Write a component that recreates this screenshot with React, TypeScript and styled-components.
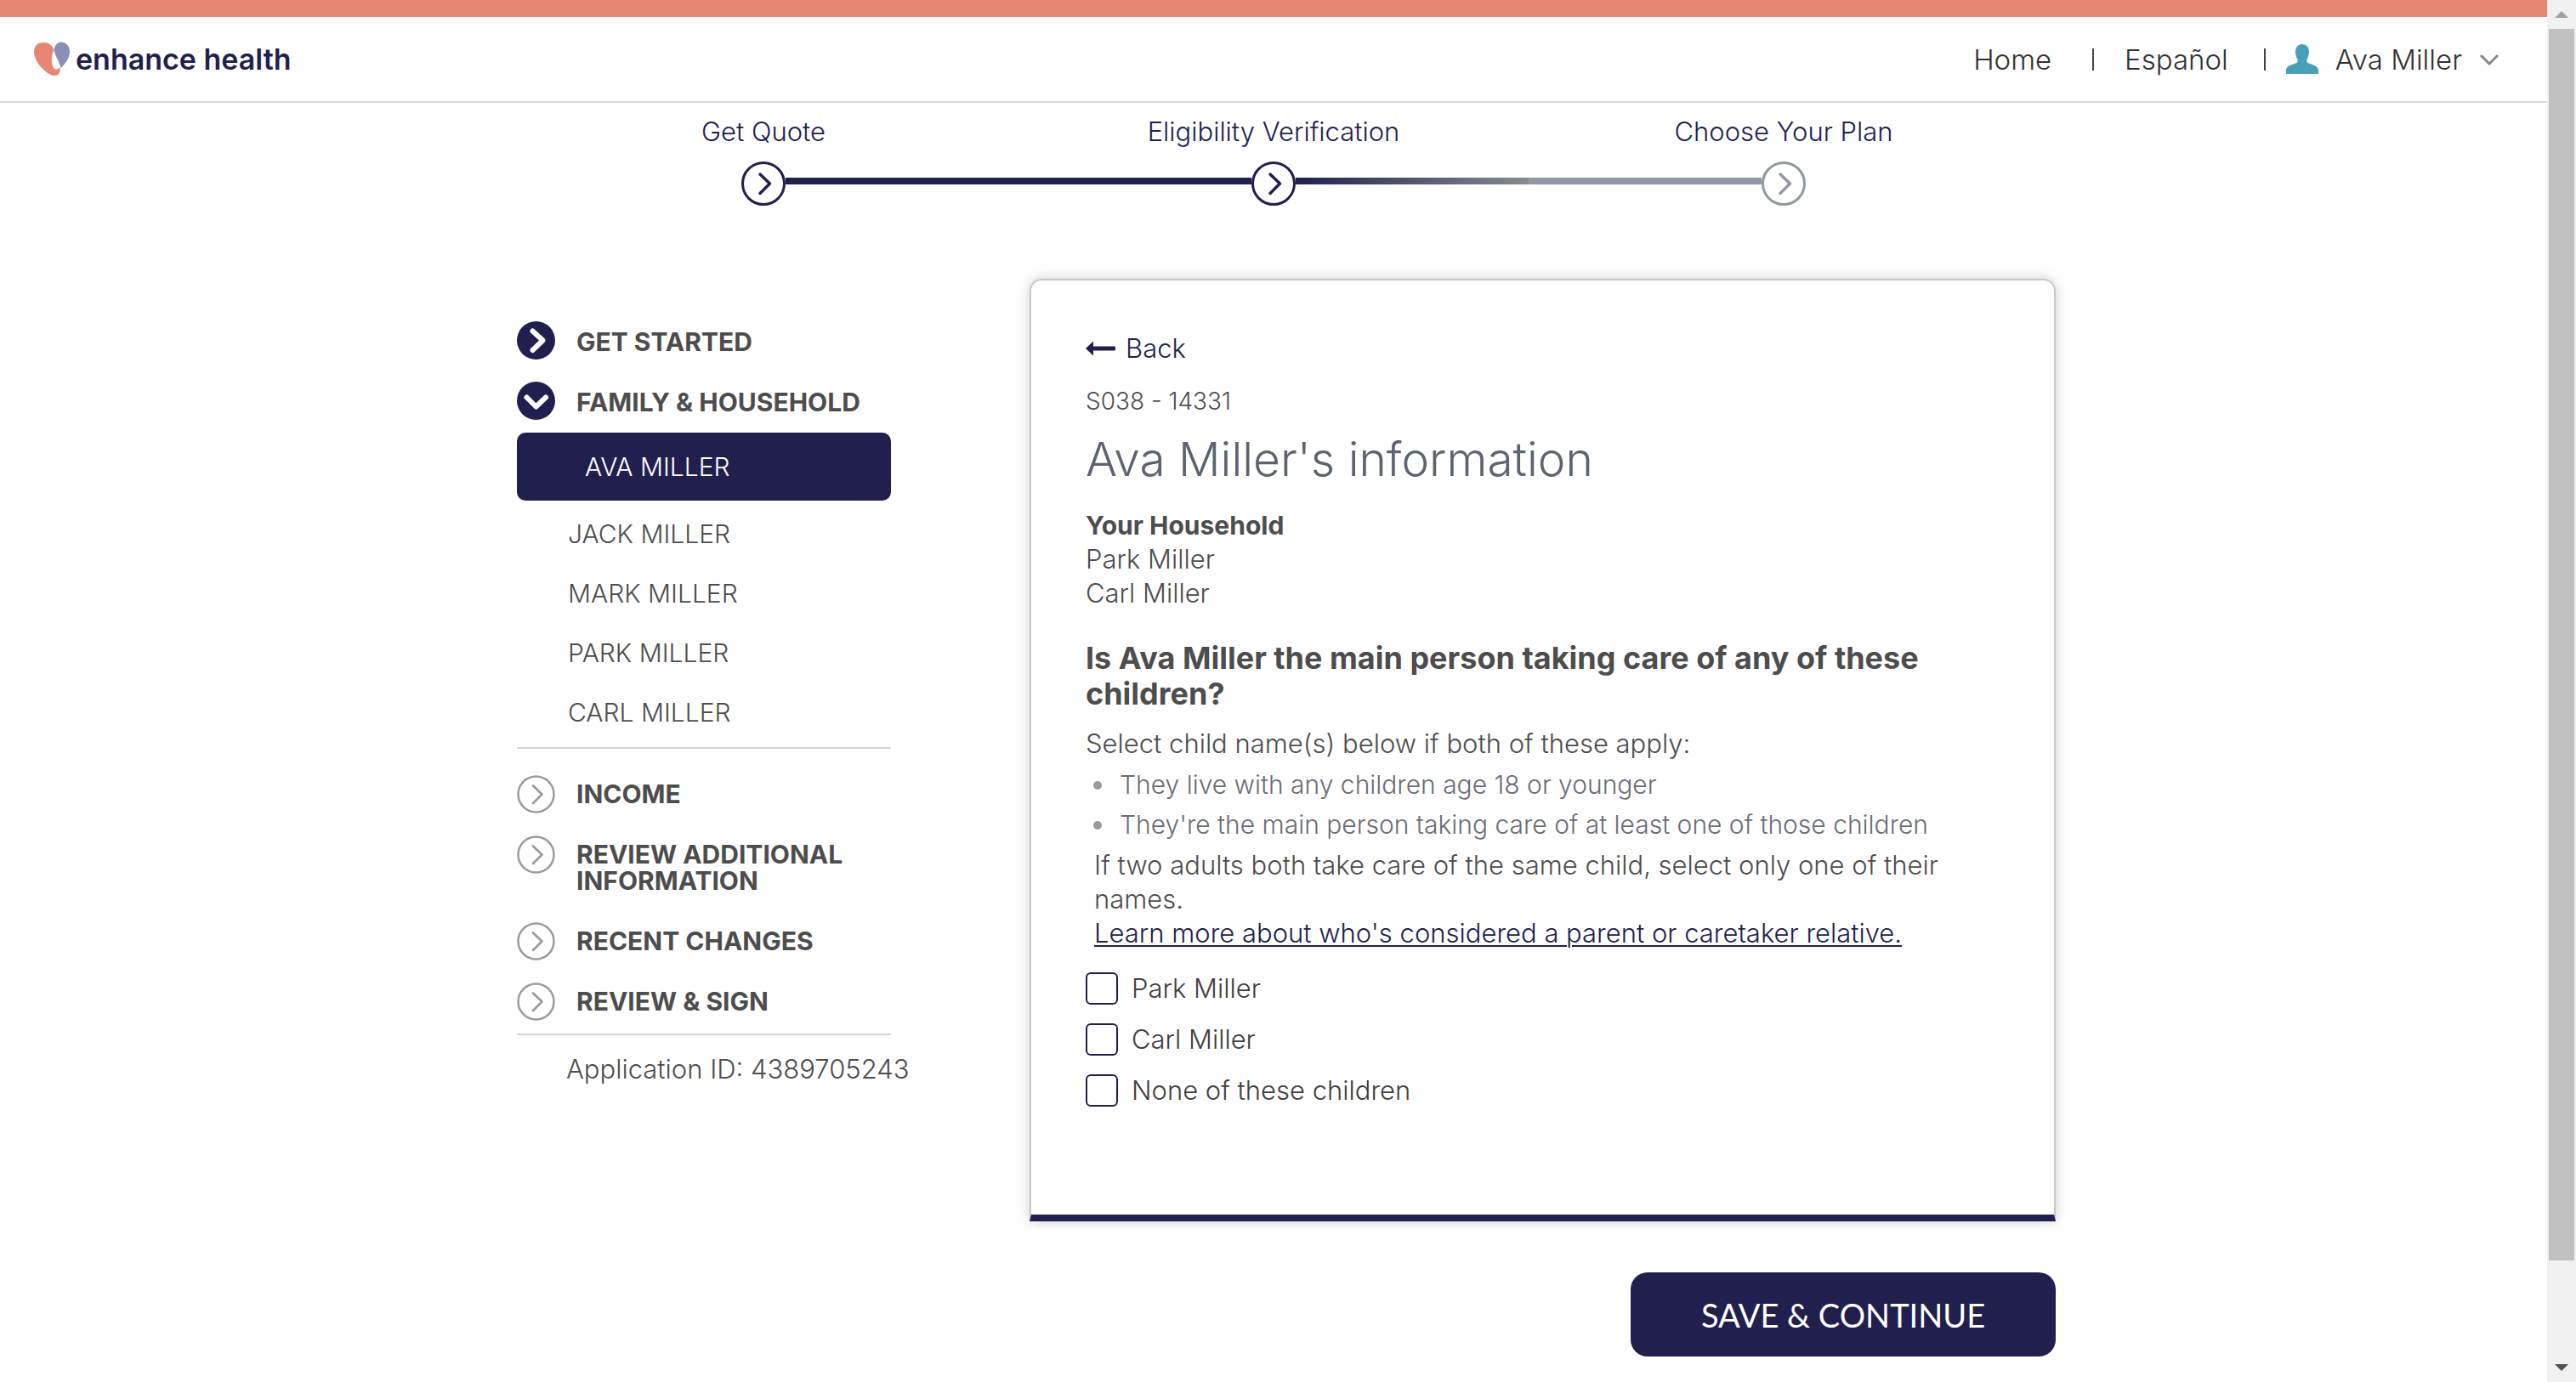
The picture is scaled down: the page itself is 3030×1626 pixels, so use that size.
import React, { useState } from "react";
import styled, { createGlobalStyle, css } from "styled-components";

const navy = "#211f4e";
const ink = "#4d4d4d";
const slate = "#8f98a4";
const rule = "#d4d4d4";
const gray = "#9b9b9b";

const GlobalStyle = createGlobalStyle`
  *, *::before, *::after { box-sizing: border-box; }
  body {
    margin: 0;
    background: #fff;
    color: ${ink};
    font-family: Inter, "Open Sans", sans-serif;
    font-size: 31px;
    font-weight: 300;
    line-height: 40px;
  }
  h1, h2, p, ul, ol { margin: 0; padding: 0; }
  ul, ol { list-style: none; }
  a { color: inherit; text-decoration: none; }
  button { font: inherit; color: inherit; border: 0; background: none; padding: 0; cursor: pointer; }
  svg { flex-shrink: 0; }
`;

const Frame = styled.div`
  display: grid;
  grid-template-columns: minmax(0, 1fr) 34px;
  height: 100vh;
`;

const Page = styled.div`
  overflow-y: auto;
  scrollbar-width: none;
`;

const ScrollRail = styled.div`
  display: flex;
  flex-direction: column;
  background: #f1f1f1;
`;

const RailEnd = styled.div`
  display: flex;
  align-items: center;
  justify-content: center;
  height: 34px;
`;

const RailTrack = styled.div`
  flex: 1;
  padding: 0 2px;
`;

const RailThumb = styled.div`
  height: 93%;
  background: #c1c1c1;
`;

const Header = styled.header`
  display: flex;
  align-items: center;
  justify-content: space-between;
  height: 121px;
  padding: 0 56px 0 40px;
  border-top: 20px solid #e68673;
  border-bottom: 2px solid #d9d9d9;
`;

const Brand = styled.a`
  display: flex;
  align-items: center;
  gap: 6px;
  color: ${navy};
  font-size: 34px;
  font-weight: 600;
`;

const Nav = styled.nav`
  display: flex;
  align-items: center;
  color: #333;
  font-size: 33px;
`;

const NavDivider = styled.span`
  width: 2px;
  height: 26px;
  margin: 0 36px 0 48px;
  background: #444;

  &:nth-of-type(2) {
    margin: 0 24px 0 42px;
  }
`;

const AccountButton = styled.button`
  display: flex;
  align-items: center;
  gap: 20px;
`;

const Steps = styled.ol`
  display: grid;
  grid-template-columns: repeat(3, minmax(0, 1fr));
  max-width: 1800px;
  margin: 14px auto 0;
`;

const Step = styled.li`
  text-align: center;
  color: ${navy};
  font-size: 31px;
`;

const StepTrack = styled.div`
  display: flex;
  align-items: center;
  margin-top: 15px;
`;

const StepLine = styled.span<{ $fill: string }>`
  flex: 1;
  height: 8px;
  margin-bottom: 6px;
  background: ${(p) => p.$fill};
`;

const Layout = styled.div`
  display: grid;
  grid-template-columns: 470px minmax(0, 1207px);
  justify-content: space-between;
  align-items: start;
  max-width: 1840px;
  margin: 0 auto;
`;

const Sidebar = styled.nav`
  padding: 136px 0 0 30px;
`;

const SectionList = styled.ul`
  border-bottom: 2px solid ${rule};

  & + & {
    padding-top: 31px;
  }
`;

const Section = styled.li<{ $tight?: boolean; $visited?: boolean }>`
  > a {
    display: flex;
    align-items: flex-start;
    gap: 25px;
    font-size: 30px;
    font-weight: 700;
    line-height: 31px;
  }

  > a > span {
    padding-top: ${(p) => (p.$visited ? 9 : 7)}px;
    padding-bottom: ${(p) => (p.$tight ? 22 : 33) - (p.$visited ? 2 : 0)}px;
  }
`;

const People = styled.ul`
  padding-bottom: 6px;
`;

const Person = styled.a<{ $current?: boolean }>`
  display: block;
  padding-left: 60px;
  font-size: 30px;
  line-height: 70px;

  ${(p) =>
    p.$current &&
    css`
      margin-bottom: 4px;
      padding-left: 80px;
      border-radius: 10px;
      background: ${navy};
      color: #fff;
      line-height: 80px;
    `}
`;

const ApplicationId = styled.p`
  padding: 20px 0 0 58px;
  white-space: nowrap;
`;

const Main = styled.main`
  padding-top: 86px;
`;

const Card = styled.section`
  padding: 58px 64px 126px;
  border: 2px solid #c9c9c9;
  border-bottom: 8px solid ${navy};
  border-radius: 14px 14px 0 0;
  box-shadow: 0 0 14px rgba(0, 0, 0, 0.2);
`;

const BackLink = styled.a`
  display: inline-flex;
  align-items: center;
  gap: 12px;
  color: ${navy};
`;

const ScreenCode = styled.p`
  margin-top: 22px;
  font-size: 28px;
`;

const Title = styled.h1`
  margin-top: 18px;
  color: #5b6470;
  font-size: 55px;
  font-weight: 300;
  line-height: 60px;
`;

const Household = styled.div`
  margin-top: 28px;
`;

const Subhead = styled.h2`
  font-size: 30px;
  font-weight: 700;
  line-height: 40px;
`;

const Question = styled.legend`
  width: 1020px;
  max-width: 100%;
  padding: 0;
  font-size: 36px;
  font-weight: 700;
  line-height: 42px;
`;

const Fieldset = styled.fieldset`
  margin: 35px 0 0;
  padding: 0;
  border: 0;
`;

const Intro = styled.p`
  margin-top: 18px;
`;

const Conditions = styled.ul`
  margin-top: 5px;
  color: #6a6d78;
  font-size: 30px;
  line-height: 47px;
`;

const Condition = styled.li`
  display: flex;
  align-items: center;
  gap: 21px;
  padding-left: 9px;

  &::before {
    content: "";
    width: 10px;
    height: 10px;
    border-radius: 50%;
    background: ${gray};
  }
`;

const Hint = styled.p`
  margin-top: 4px;
  padding-left: 10px;
`;

const LearnLink = styled.a`
  color: ${navy};
  text-decoration: underline;
  text-decoration-thickness: 2px;
  text-underline-offset: 3px;
`;

const Choices = styled.div`
  display: grid;
  gap: 20px;
  margin-top: 25px;
`;

const Choice = styled.label`
  display: flex;
  align-items: center;
  gap: 16px;
  color: #404040;
  cursor: pointer;
`;

const Checkbox = styled.input`
  appearance: none;
  width: 38px;
  height: 38px;
  margin: 1px 0;
  border: 2px solid ${navy};
  border-radius: 6px;

  &:checked {
    background: ${navy};
    box-shadow: inset 0 0 0 6px #fff;
  }
`;

const Actions = styled.div`
  display: flex;
  justify-content: flex-end;
  margin-top: 60px;
`;

const SaveButton = styled.button`
  min-width: 500px;
  height: 99px;
  border-radius: 20px;
  background: ${navy};
  color: #fff;
  font-family: Lato, "Open Sans", sans-serif;
  font-size: 38px;
  font-weight: 400;
`;

const HeartLogo = () => (
  <svg width="43" height="41" viewBox="0 0 43 41" aria-hidden="true">
    <path
      d="M0 12C0 4 5 1 12 1C18 1 22 5 23.500 10C21.500 13 20.500 19 21 24C21.300 29 23 32 26 32.500C28 32.600 29.500 31.500 30.500 30.500C31.500 36 28.500 40.500 23.500 40C16 39.500 0 25 0 12Z"
      fill="#e68673"
    />
    <path
      d="M23.500 10C24.500 4 27.500 0.500 31.500 0.500C37.500 0.500 42 5 42 11.500C42 19 37 26 31.500 31C30.500 25 24.500 16 23.500 10Z"
      fill="#8a90b5"
    />
  </svg>
);

const UserIcon = () => (
  <svg width="38" height="35" viewBox="0 0 38 35" aria-hidden="true">
    <path
      d="M19 0C24 0 27 3.500 27 9C27 12 26 15.500 24.500 18V21C25.500 23.500 38 23.500 38 31V35H0V31C0 23.500 12.500 23.500 13.500 21V18C12 15.500 11 12 11 9C11 3.500 14 0 19 0Z"
      fill="#4a9fb8"
    />
  </svg>
);

const CaretIcon = () => (
  <svg width="24" height="14" viewBox="0 0 24 14" aria-hidden="true">
    <path d="M2 2L12 12L22 2" fill="none" stroke="#8a8a8a" strokeWidth="3" />
  </svg>
);

const ArrowIcon = () => (
  <svg width="35" height="18" viewBox="0 0 35 18" aria-hidden="true">
    <path d="M0 9L9 0.500V6.500H34Q35 6.500 35 7.500V10.500Q35 11.500 34 11.500H9V17.500Z" fill={navy} />
  </svg>
);

const StepIcon = ({ color }: { color: string }) => (
  <svg width="52" height="52" viewBox="0 0 52 52" fill="none" stroke={color} aria-hidden="true">
    <circle cx="26" cy="26" r="24.500" strokeWidth="3" />
    <path d="M22 15L33.500 26L22 37.500" strokeWidth="3.500" strokeLinecap="round" strokeLinejoin="round" />
  </svg>
);

type BadgeKind = "done" | "open" | "todo";

const Badge = ({ kind }: { kind: BadgeKind }) => (
  <svg width="45" height="45" viewBox="0 0 45 45" fill="none" strokeLinecap="round" strokeLinejoin="round" aria-hidden="true">
    {kind === "todo" ? (
      <>
        <circle cx="22.500" cy="22.500" r="21" stroke={gray} strokeWidth="2.500" />
        <path d="M19 12.500L29.500 22.500L19 33" stroke={gray} strokeWidth="2.800" />
      </>
    ) : (
      <>
        <circle cx="22.500" cy="22.500" r="22.500" fill={navy} />
        <path
          d={kind === "done" ? "M18.500 11.500L30.500 22.500L18.500 34" : "M11.500 18.500L22.500 29.500L34 18.500"}
          stroke="#fff"
          strokeWidth="6"
        />
      </>
    )}
  </svg>
);

const steps = [
  { label: "Get Quote", before: "transparent", after: navy, color: navy },
  { label: "Eligibility Verification", before: navy, after: `linear-gradient(90deg, ${navy}, #868c92)`, color: navy },
  { label: "Choose Your Plan", before: slate, after: "transparent", color: slate },
];

const people = ["AVA MILLER", "JACK MILLER", "MARK MILLER", "PARK MILLER", "CARL MILLER"];
const upcoming = ["INCOME", "REVIEW ADDITIONAL INFORMATION", "RECENT CHANGES", "REVIEW & SIGN"];
const options = ["Park Miller", "Carl Miller", "None of these children"];

export default function App() {
  const [picked, setPicked] = useState<string[]>([]);
  const toggle = (name: string) =>
    setPicked((list) => (list.includes(name) ? list.filter((n) => n !== name) : [...list, name]));

  return (
    <>
      <GlobalStyle />
      <Frame>
        <Page>
          <Header>
            <Brand href="#">
              <HeartLogo />
              enhance health
            </Brand>
            <Nav>
              <a href="#home">Home</a>
              <NavDivider />
              <a href="#es">Español</a>
              <NavDivider />
              <AccountButton type="button">
                <UserIcon />
                Ava Miller
                <CaretIcon />
              </AccountButton>
            </Nav>
          </Header>

          <Steps>
            {steps.map((s) => (
              <Step key={s.label}>
                {s.label}
                <StepTrack>
                  <StepLine $fill={s.before} />
                  <StepIcon color={s.color} />
                  <StepLine $fill={s.after} />
                </StepTrack>
              </Step>
            ))}
          </Steps>

          <Layout>
            <Sidebar>
              <SectionList>
                <Section $visited>
                  <a href="#start">
                    <Badge kind="done" />
                    <span>GET STARTED</span>
                  </a>
                </Section>
                <Section $visited $tight>
                  <a href="#family">
                    <Badge kind="open" />
                    <span>FAMILY &amp; HOUSEHOLD</span>
                  </a>
                  <People>
                    {people.map((name, i) => (
                      <li key={name}>
                        <Person href="#person" $current={i === 0}>
                          {name}
                        </Person>
                      </li>
                    ))}
                  </People>
                </Section>
              </SectionList>
              <SectionList>
                {upcoming.map((name, i) => (
                  <Section key={name} $tight={i === upcoming.length - 1}>
                    <a href="#section">
                      <Badge kind="todo" />
                      <span>{name}</span>
                    </a>
                  </Section>
                ))}
              </SectionList>
              <ApplicationId>Application ID: 4389705243</ApplicationId>
            </Sidebar>

            <Main>
              <Card>
                <BackLink href="#back">
                  <ArrowIcon />
                  Back
                </BackLink>
                <ScreenCode>S038 - 14331</ScreenCode>
                <Title>Ava Miller's information</Title>
                <Household>
                  <Subhead>Your Household</Subhead>
                  <p>Park Miller</p>
                  <p>Carl Miller</p>
                </Household>
                <Fieldset>
                  <Question>Is Ava Miller the main person taking care of any of these children?</Question>
                  <Intro>Select child name(s) below if both of these apply:</Intro>
                  <Conditions>
                    <Condition>They live with any children age 18 or younger</Condition>
                    <Condition>They're the main person taking care of at least one of those children</Condition>
                  </Conditions>
                  <Hint>
                    If two adults both take care of the same child, select only one of their names.
                    <br />
                    <LearnLink href="#learn">Learn more about who's considered a parent or caretaker relative.</LearnLink>
                  </Hint>
                  <Choices>
                    {options.map((name) => (
                      <Choice key={name}>
                        <Checkbox type="checkbox" checked={picked.includes(name)} onChange={() => toggle(name)} />
                        {name}
                      </Choice>
                    ))}
                  </Choices>
                </Fieldset>
              </Card>
              <Actions>
                <SaveButton type="button">SAVE &amp; CONTINUE</SaveButton>
              </Actions>
            </Main>
          </Layout>
        </Page>

        <ScrollRail aria-hidden="true">
          <RailEnd>
            <svg width="16" height="8" viewBox="0 0 16 8">
              <path d="M0 8L8 0L16 8Z" fill="#a3a3a3" />
            </svg>
          </RailEnd>
          <RailTrack>
            <RailThumb />
          </RailTrack>
          <RailEnd>
            <svg width="16" height="8" viewBox="0 0 16 8">
              <path d="M0 0L8 8L16 0Z" fill="#505050" />
            </svg>
          </RailEnd>
        </ScrollRail>
      </Frame>
    </>
  );
}
